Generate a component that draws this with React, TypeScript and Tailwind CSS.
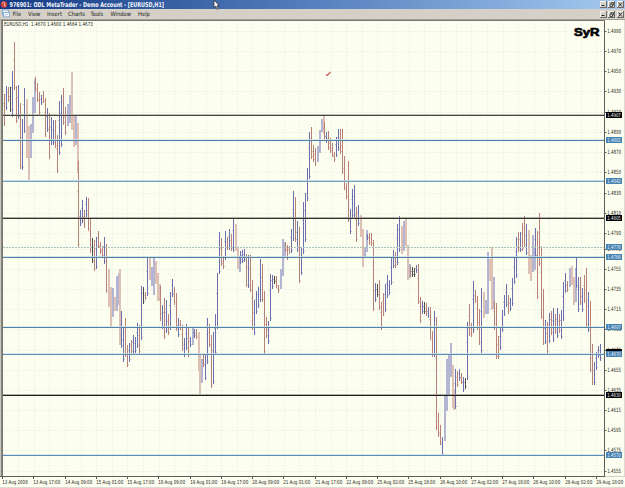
type Bar = [x: number, high: number, low: number, kind: string];

// r = down, b = up, k = flat, capitals are the faded wide bars
const bars: Bar[] = [
  [2, 90, 106, 'k'], [4, 94, 126, 'r'], [6, 86, 110, 'b'], [8, 87, 102, 'r'], [10, 87, 112, 'k'], [12, 71, 117, 'b'],
  [14, 42, 90, 'r'], [16, 86, 123, 'r'], [18, 85, 119, 'b'], [20, 103, 169, 'r'], [22, 119, 170, 'b'], [24, 88, 133, 'b'],
  [26, 99, 158, 'R'], [28, 126, 180, 'R'], [30, 124, 158, 'B'], [32, 97, 133, 'B'], [34, 79, 113, 'B'], [35, 77, 91, 'r'],
  [37, 83, 102, 'r'], [39, 92, 115, 'r'], [41, 95, 105, 'b'], [43, 91, 103, 'r'], [45, 98, 137, 'r'], [47, 108, 132, 'b'],
  [49, 113, 159, 'r'], [51, 117, 145, 'b'], [53, 120, 145, 'b'], [55, 120, 148, 'r'], [57, 135, 173, 'r'], [59, 101, 155, 'b'],
  [61, 95, 147, 'b'], [63, 88, 125, 'r'], [65, 107, 135, 'r'], [67, 104, 126, 'B'], [69, 95, 123, 'B'], [71, 72, 130, 'R'],
  [73, 115, 147, 'R'], [75, 116, 145, 'B'], [77, 123, 173, 'R'], [78, 161, 247, 'r'], [80, 210, 226, 'b'], [82, 200, 223, 'b'],
  [84, 210, 228, 'r'], [86, 197, 217, 'b'], [88, 198, 231, 'r'], [90, 219, 253, 'r'], [92, 238, 263, 'k'], [94, 240, 271, 'r'],
  [96, 237, 269, 'b'], [98, 231, 248, 'r'], [100, 242, 254, 'r'], [102, 246, 258, 'r'], [104, 237, 264, 'b'], [106, 244, 293, 'r'],
  [108, 269, 307, 'R'], [110, 287, 327, 'R'], [112, 288, 317, 'B'], [114, 297, 311, 'R'], [116, 276, 311, 'B'], [118, 273, 305, 'B'],
  [119, 269, 345, 'R'], [121, 311, 348, 'b'], [123, 326, 362, 'b'], [125, 318, 357, 'r'], [127, 345, 367, 'r'], [129, 343, 362, 'b'],
  [131, 340, 354, 'r'], [133, 335, 354, 'b'], [135, 337, 353, 'b'], [137, 323, 348, 'b'], [139, 325, 354, 'r'], [141, 286, 340, 'b'],
  [143, 287, 304, 'k'], [145, 292, 300, 'r'], [147, 258, 296, 'b'], [149, 258, 280, 'R'], [151, 267, 286, 'B'], [153, 257, 295, 'B'],
  [155, 261, 284, 'R'], [157, 273, 301, 'R'], [159, 284, 301, 'R'], [160, 286, 321, 'r'], [162, 305, 329, 'b'], [164, 298, 339, 'r'],
  [166, 300, 333, 'b'], [168, 314, 335, 'r'], [170, 292, 330, 'b'], [172, 279, 297, 'b'], [174, 287, 305, 'r'], [176, 293, 331, 'r'],
  [178, 318, 337, 'b'], [180, 320, 330, 'r'], [182, 325, 351, 'r'], [184, 338, 357, 'b'], [186, 324, 350, 'b'], [188, 327, 357, 'r'],
  [190, 337, 347, 'b'], [192, 328, 345, 'B'], [194, 329, 338, 'b'], [196, 329, 339, 'r'], [198, 332, 371, 'R'], [199, 354, 394, 'R'],
  [201, 359, 383, 'B'], [203, 355, 367, 'r'], [205, 355, 380, 'b'], [207, 318, 364, 'b'], [209, 324, 347, 'r'], [211, 335, 388, 'r'],
  [213, 332, 384, 'b'], [215, 314, 355, 'b'], [217, 273, 329, 'b'], [219, 232, 274, 'b'], [221, 238, 266, 'r'], [223, 256, 269, 'r'],
  [225, 231, 260, 'b'], [227, 237, 250, 'r'], [229, 229, 250, 'b'], [231, 234, 251, 'r'], [233, 218, 252, 'b'], [235, 224, 251, 'R'],
  [237, 247, 269, 'R'], [239, 256, 272, 'B'], [240, 251, 264, 'b'], [242, 250, 263, 'b'], [244, 249, 262, 'b'], [246, 254, 287, 'r'],
  [248, 255, 288, 'b'], [250, 255, 292, 'r'], [252, 280, 330, 'r'], [254, 300, 335, 'b'], [256, 291, 314, 'b'], [258, 287, 308, 'b'],
  [260, 259, 302, 'b'], [262, 264, 302, 'r'], [264, 291, 354, 'r'], [266, 317, 338, 'r'], [268, 321, 344, 'b'], [270, 274, 321, 'b'],
  [272, 275, 289, 'b'], [274, 276, 284, 'k'], [276, 276, 288, 'r'], [278, 285, 293, 'r'], [280, 269, 289, 'B'], [282, 239, 276, 'B'],
  [284, 242, 258, 'B'], [285, 242, 252, 'r'], [287, 245, 260, 'r'], [289, 246, 254, 'r'], [291, 229, 253, 'b'], [293, 191, 241, 'b'],
  [295, 197, 242, 'r'], [297, 221, 252, 'b'], [299, 227, 283, 'r'], [301, 248, 275, 'b'], [303, 202, 254, 'b'], [305, 193, 242, 'b'],
  [307, 168, 201, 'b'], [309, 132, 179, 'b'], [311, 127, 159, 'r'], [313, 145, 162, 'r'], [315, 148, 166, 'r'], [317, 146, 162, 'B'],
  [319, 130, 153, 'B'], [321, 119, 132, 'B'], [323, 115, 134, 'R'], [324, 122, 140, 'r'], [326, 132, 143, 'b'], [328, 131, 150, 'r'],
  [330, 138, 153, 'r'], [332, 143, 157, 'r'], [334, 152, 162, 'r'], [336, 137, 157, 'b'], [338, 129, 151, 'b'], [340, 129, 154, 'r'],
  [342, 129, 174, 'r'], [344, 156, 190, 'r'], [346, 183, 199, 'r'], [348, 161, 222, 'r'], [350, 209, 234, 'b'], [352, 189, 218, 'b'],
  [354, 185, 217, 'b'], [356, 207, 242, 'r'], [358, 205, 226, 'b'], [360, 215, 237, 'R'], [362, 229, 267, 'R'], [364, 247, 258, 'B'],
  [366, 230, 252, 'B'], [367, 234, 240, 'b'], [369, 233, 245, 'r'], [371, 233, 246, 'r'], [373, 240, 311, 'r'], [375, 283, 302, 'b'],
  [377, 284, 297, 'k'], [379, 280, 310, 'r'], [381, 302, 330, 'r'], [383, 293, 316, 'r'], [385, 284, 312, 'b'], [387, 275, 298, 'b'],
  [389, 280, 295, 'b'], [391, 257, 285, 'b'], [393, 250, 268, 'b'], [395, 252, 268, 'r'], [397, 224, 265, 'b'], [399, 216, 252, 'b'],
  [401, 226, 254, 'R'], [403, 221, 251, 'B'], [405, 218, 246, 'R'], [407, 245, 280, 'R'], [409, 264, 278, 'B'], [410, 267, 277, 'r'],
  [412, 267, 277, 'k'], [414, 268, 277, 'k'], [416, 265, 273, 'b'], [418, 264, 304, 'r'], [420, 297, 323, 'r'], [422, 301, 314, 'b'],
  [424, 302, 314, 'k'], [426, 303, 316, 'r'], [428, 307, 318, 'b'], [430, 307, 340, 'r'], [432, 331, 357, 'r'], [434, 311, 357, 'b'],
  [436, 317, 430, 'r'], [438, 413, 437, 'r'], [440, 425, 445, 'r'], [442, 437, 456, 'b'], [444, 395, 441, 'B'], [446, 359, 411, 'B'],
  [448, 355, 396, 'B'], [450, 343, 377, 'B'], [452, 365, 408, 'R'], [453, 389, 410, 'R'], [455, 369, 409, 'b'], [457, 371, 387, 'r'],
  [459, 369, 381, 'b'], [461, 373, 384, 'r'], [463, 377, 392, 'b'], [465, 378, 389, 'k'], [467, 322, 380, 'b'], [469, 304, 336, 'r'],
  [471, 323, 337, 'r'], [473, 281, 333, 'b'], [475, 290, 303, 'r'], [477, 296, 330, 'r'], [479, 309, 345, 'r'], [481, 288, 353, 'b'],
  [483, 292, 318, 'R'], [485, 300, 314, 'B'], [487, 252, 314, 'B'], [489, 259, 281, 'R'], [491, 247, 310, 'R'], [493, 277, 309, 'B'],
  [494, 301, 330, 'r'], [496, 303, 359, 'r'], [498, 336, 359, 'r'], [500, 328, 350, 'b'], [502, 310, 332, 'b'], [504, 295, 316, 'b'],
  [506, 284, 307, 'b'], [508, 295, 314, 'r'], [510, 298, 311, 'b'], [512, 278, 306, 'b'], [514, 258, 284, 'b'], [516, 237, 278, 'b'],
  [518, 232, 252, 'r'], [520, 232, 252, 'b'], [522, 223, 251, 'r'], [524, 216, 247, 'r'], [526, 224, 255, 'b'], [528, 230, 274, 'R'],
  [530, 255, 281, 'R'], [532, 235, 272, 'B'], [534, 247, 270, 'B'], [535, 228, 258, 'b'], [537, 231, 299, 'r'], [539, 213, 266, 'r'],
  [541, 246, 319, 'r'], [543, 289, 345, 'r'], [545, 320, 344, 'b'], [547, 322, 354, 'r'], [549, 313, 343, 'b'], [551, 311, 335, 'r'],
  [553, 308, 342, 'b'], [555, 314, 334, 'r'], [557, 308, 338, 'b'], [559, 314, 333, 'r'], [561, 310, 339, 'b'], [563, 282, 321, 'b'],
  [565, 273, 293, 'b'], [567, 281, 292, 'r'], [569, 268, 287, 'B'], [571, 266, 285, 'R'], [573, 277, 305, 'R'], [575, 268, 302, 'B'],
  [576, 258, 288, 'b'], [578, 277, 312, 'b'], [580, 277, 305, 'r'], [582, 288, 312, 'b'], [584, 275, 303, 'r'], [586, 268, 327, 'r'],
  [588, 292, 332, 'b'], [590, 301, 372, 'r'], [592, 344, 385, 'r'], [594, 362, 385, 'b'], [596, 352, 370, 'b'], [598, 346, 358, 'b'],
  [600, 344, 361, 'b'],
];

const barColors: Record<string, string> = {
  r: '#b98078',
  b: '#6d6fae',
  k: '#4c4c4c',
  R: '#dfc0b4',
  B: '#b3b5d2',
};

const prices: [number, string][] = [
  [31, '1.4990'], [51, '1.4970'], [71, '1.4950'], [91, '1.4930'], [112, '1.4910'], [132, '1.4890'], [152, '1.4870'],
  [172, '1.4850'], [193, '1.4830'], [213, '1.4810'], [233, '1.4790'], [249, '1.4775'], [269, '1.4755'], [289, '1.4735'],
  [309, '1.4715'], [329, '1.4695'], [350, '1.4675'], [370, '1.4655'], [390, '1.4635'], [410, '1.4615'], [430, '1.4595'],
  [450, '1.4575'], [471, '1.4555'],
];

const levels: { y: number; price: string; color: string; halo: string; tag: string }[] = [
  { y: 115, price: '1.4907', color: '#454541', halo: '#a4a59c', tag: '#000000' },
  { y: 140, price: '1.4882', color: '#4d82ac', halo: '#d5e2e3', tag: '#4682b4' },
  { y: 181, price: '1.4842', color: '#75a5c4', halo: '#aecbd8', tag: '#4682b4' },
  { y: 218, price: '1.4805', color: '#33332f', halo: '#8f8f87', tag: '#000000' },
  { y: 257, price: '1.4766', color: '#4d82ac', halo: '#c3d7db', tag: '#4682b4' },
  { y: 327, price: '1.4697', color: '#4d82ac', halo: '#d5e2e3', tag: '#4682b4' },
  { y: 354, price: '1.4670', color: '#5c90ba', halo: '#c8dae0', tag: '#4682b4' },
  { y: 395, price: '1.4630', color: '#1d1d1b', halo: '#8f8f87', tag: '#000000' },
  { y: 455, price: '1.4570', color: '#5c90ba', halo: '#c8dae0', tag: '#4682b4' },
];

const times = [
  '13 Aug 2008', '13 Aug 17:00', '14 Aug 09:00', '15 Aug 01:00', '15 Aug 17:00', '18 Aug 09:00', '19 Aug 01:00',
  '19 Aug 17:00', '20 Aug 09:00', '21 Aug 01:00', '21 Aug 17:00', '22 Aug 09:00', '25 Aug 02:00', '25 Aug 18:00',
  '26 Aug 10:00', '27 Aug 02:00', '27 Aug 18:00', '28 Aug 10:00', '29 Aug 02:00', '29 Aug 18:00',
];

const menus = [
  { label: 'File', width: 'w-[15.5px]' },
  { label: 'View', width: 'w-[19px]' },
  { label: 'Insert', width: 'w-[21px]' },
  { label: 'Charts', width: 'w-[22.5px]' },
  { label: 'Tools', width: 'w-[20px]' },
  { label: 'Window', width: 'w-[27.5px]' },
  { label: 'Help', width: 'w-[20px]' },
];

const WindowButtons = () => (
  <svg width="24" height="9" viewBox="0 0 24 9" className="shrink-0">
    {[0, 8, 17].map((x) => (
      <g key={x} shapeRendering="crispEdges">
        <rect x={x} y="1" width="7" height="7" fill="#6b6a65" />
        <rect x={x} y="1" width="6" height="6" fill="#f4f3ef" />
        <rect x={x + 1} y="2" width="5" height="5" fill="#d4d0c8" />
      </g>
    ))}
    <path d="M1.5 5.5h3" stroke="#222" />
    <path d="M11 4V2.5h2.5V5H12.5M10 4h2.5v2.5H10z" fill="none" stroke="#333" strokeWidth="0.8" />
    <path d="M18.5 2.5l3.5 4M22 2.5l-3.5 4" stroke="#222" strokeWidth="0.9" />
  </svg>
);

const TitleBar = () => (
  <div className="flex h-[9px] shrink-0 items-center bg-linear-to-r from-[#153a85] via-[#557fbd] to-[#a6caf0] pr-px">
    <svg width="9" height="9" viewBox="0 0 9 9" className="shrink-0">
      <circle cx="4" cy="4.5" r="3.3" fill="#c93a34" />
      <path d="M2 3.6l1.6-1.5 1.5 1.4-1 2.2 1.7.6" fill="none" stroke="#f6d9d2" strokeWidth="0.9" />
    </svg>
    <svg width="156" height="9" className="shrink-0 overflow-visible">
      <text x="0.5" y="6.8" textLength="154.5" lengthAdjust="spacingAndGlyphs" fontSize="6.6" fontWeight="bold" fill="#f2f5fa">
        976901: ODL MetaTrader - Demo Account - [EURUSD,H1]
      </text>
    </svg>
    <div className="flex-1" />
    <WindowButtons />
  </div>
);

const MenuBar = () => (
  <div className="flex h-[10px] shrink-0 items-center bg-[#d4d0c8] pr-px">
    <svg width="12.5" height="10" viewBox="0 0 12.5 10" className="shrink-0">
      <rect x="2.3" y="1" width="6" height="4.6" fill="#e9f3fa" stroke="#6ea0cc" strokeWidth="0.8" />
      <rect x="3.6" y="3.4" width="5.8" height="4.4" fill="#fff" stroke="#6ea0cc" strokeWidth="0.8" />
      <path d="M4.5 6.6l1.3-1.4 1 .8 1.6-1.5" stroke="#86afd4" strokeWidth="0.7" fill="none" />
    </svg>
    {menus.map((menu) => (
      <span key={menu.label} className={`shrink-0 whitespace-nowrap text-[5.8px] leading-[9px] text-[#1a1a1a] ${menu.width}`}>
        {menu.label}
      </span>
    ))}
    <div className="flex-1" />
    <WindowButtons />
  </div>
);

const Chart = () => (
  <svg width="625" height="456" viewBox="0 20 625 456" className="block shrink-0">
    <rect x="0" y="20" width="625" height="456" fill="#fcfeef" />

    <g stroke="#f1f3e8" strokeDasharray="2 1" shapeRendering="crispEdges">
      {prices.map(([y]) => (
        <path key={y} d={`M3 ${y + 0.5}H604`} />
      ))}
      {Array.from({ length: 38 }, (_, i) => (
        <path key={i} d={`M${Math.round(18 + i * 15.63) + 0.5} 21V476`} />
      ))}
    </g>

    <g shapeRendering="crispEdges">
      {bars.map(([x, high, low, kind]) => {
        const wide = kind === 'R' || kind === 'B';
        const mid = Math.round(high + (low - high) * 0.35);
        return (
          <g key={x} fill={barColors[kind]}>
            <rect x={x} y={high} width={wide ? 2 : 1} height={low - high} />
            {!wide && <rect x={x - 1} y={mid} width="1" height="1" opacity="0.4" />}
            {!wide && <rect x={x + 1} y={low - 3} width="1" height="1" opacity="0.4" />}
          </g>
        );
      })}
    </g>

    <g shapeRendering="crispEdges">
      <path d="M3 247.5H604" stroke="#a9c2be" strokeDasharray="2 1" />
      {levels.map((level) => (
        <g key={level.y}>
          <rect x="3" y={level.y - 1} width="601" height="1" fill={level.halo} opacity="0.7" />
          <rect x="3" y={level.y} width="601" height="1" fill={level.color} />
        </g>
      ))}
      <rect x="0" y="20" width="1" height="456" fill="#c9c7be" />
      <rect x="1" y="20" width="1" height="456" fill="#85837c" />
      <rect x="2" y="20" width="1" height="456" fill="#77776f" />
      <rect x="604" y="20" width="1" height="456" fill="#5d5d59" />
      <rect x="2" y="20" width="603" height="1" fill="#77776f" />
      <rect x="624" y="20" width="1" height="456" fill="#dedbd3" />
    </g>

    <g fontSize="5.7" fill="#262624">
      {prices.map(([y, label]) => (
        <g key={label}>
          <path d={`M605 ${y + 0.5}h1.5`} stroke="#5d5d59" />
          <text x="607.3" y={y + 2.3} textLength="13.8" lengthAdjust="spacingAndGlyphs">{label}</text>
        </g>
      ))}
    </g>
    <rect x="606" y="349" width="16" height="4" fill="#000" />
    {[...levels, { y: 247, price: '1.4776', tag: '#4682b4' }].map((level) => (
      <g key={level.price}>
        <rect x="606" y={level.y - 3} width="16" height="6" fill={level.tag} shapeRendering="crispEdges" />
        <text x="607.3" y={level.y + 2} fontSize="5.5" fill="#e6edf2" textLength="13.5" lengthAdjust="spacingAndGlyphs">
          {level.price}
        </text>
      </g>
    ))}

    <text x="4" y="26.3" fontSize="5.6" fill="#1f1f1d" textLength="89" lengthAdjust="spacingAndGlyphs" xmlSpace="preserve">
      EURUSD,H1  1.4670 1.4680 1.4664 1.4673
    </text>
    <text
      x="574"
      y="36.3"
      className="font-['Liberation_Sans',sans-serif]"
      fontSize="11.8"
      fontWeight="bold"
      fill="#000"
      stroke="#000"
      strokeWidth="0.7"
      textLength="25.5"
      lengthAdjust="spacingAndGlyphs"
    >
      SyR
    </text>
    <path d="M326 74.5l1.2 1 3.4-3.5" fill="none" stroke="#cc5c5c" strokeWidth="1.2" />
  </svg>
);

const TimeAxis = () => (
  <div className="flex h-[10px] shrink-0 bg-[#fcfeef] pl-[2px]">
    {times.map((time, i) => (
      <svg key={time} width={i === times.length - 1 ? 29 : 31.26} height="10" className="shrink-0 overflow-visible">
        <path d="M0.5 0v2" stroke="#5d5d59" />
        <text x="0.2" y="6.8" fontSize="5.6" fill="#1f1f1d" textLength={time.endsWith('2008') ? 25.5 : 27} lengthAdjust="spacingAndGlyphs">
          {time}
        </text>
      </svg>
    ))}
  </div>
);

export default function App() {
  return (
    <div className="relative flex h-[488px] w-[625px] flex-col overflow-hidden bg-[#d4d0c8] font-['DejaVu_Sans_Condensed','DejaVu_Sans',sans-serif]">
      <TitleBar />
      <MenuBar />
      <div className="h-px shrink-0 bg-[#a3a299]" />
      <Chart />
      <div className="h-px w-[605px] shrink-0 bg-[#5d5d59]" />
      <TimeAxis />
      <div className="flex-1 bg-[#dddbd5]" />
      <svg width="7" height="11" viewBox="0 0 7 11" className="absolute left-[213px] top-0">
        <path d="M1 0v7.5l1.7-1.4 1.5 3.4 1.3-.6-1.5-3.2h2.3z" fill="#fff" stroke="#222" strokeWidth="0.7" />
      </svg>
    </div>
  );
}
